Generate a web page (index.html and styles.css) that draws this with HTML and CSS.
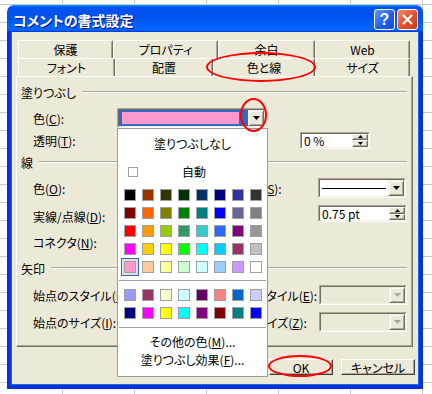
FILE: index.html
```html
<!DOCTYPE html>
<html lang="ja">
<head>
    <meta charset="UTF-8" />
    <title>コメントの書式設定</title>
    <link rel="stylesheet" href="styles.css">
</head>
<body>

    <div class="dialog">
        <div class="titlebar">
            <span class="title">コメントの書式設定</span>
            <span class="tb-btn help">?</span>
            <span class="tb-btn close">
                <svg width="13" height="13" viewBox="0 0 13 13"><path d="M2 2L11 11M11 2L2 11" stroke="#fff" stroke-width="2.2" fill="none"/></svg>
            </span>
        </div>

        <div class="client">
            <div class="tabs">
                <div class="tab-row back">
                    <div class="tab">保護</div>
                    <div class="tab">プロパティ</div>
                    <div class="tab">余白</div>
                    <div class="tab">Web</div>
                </div>
                <div class="tab-row front">
                    <div class="tab">フォント</div>
                    <div class="tab">配置</div>
                    <div class="tab active">色と線</div>
                    <div class="tab">サイズ</div>
                </div>
            </div>

            <div class="panel">
                <div class="group h26"><span>塗りつぶし</span></div>

                <div class="row h26">
                    <span class="lbl">色(<u>C</u>):</span>
                    <div class="sunken color-combo">
                        <div class="in">
                            <div class="current"><div class="current-swatch"></div></div>
                            <div class="ddbtn"><svg width="7" height="4"><polygon points="0,0 7,0 3.5,4" fill="#000"/></svg></div>
                        </div>
                    </div>
                </div>

                <div class="row h18">
                    <span class="lbl">透明(<u>T</u>):</span>
                    <div class="sunken spin trans-spin">
                        <div class="in">
                            <span class="val">0 %</span>
                            <div class="spin-btns">
                                <div class="sb"><svg width="5" height="3"><polygon points="2.5,0 5,3 0,3" fill="#000"/></svg></div>
                                <div class="sb"><svg width="5" height="3"><polygon points="0,0 5,0 2.5,3" fill="#000"/></svg></div>
                            </div>
                        </div>
                    </div>
                </div>

                <div class="group h26"><span>線</span></div>

                <div class="grid4 h26">
                    <span class="lbl">色(<u>O</u>):</span>
                    <div class="sunken hidden-combo"><div class="in"><div class="ddbtn"></div></div></div>
                    <span class="lbl">スタイル(<u>S</u>):</span>
                    <div class="sunken line-combo">
                        <div class="in">
                            <div class="line-sample"></div>
                            <div class="ddbtn"><svg width="7" height="4"><polygon points="0,0 7,0 3.5,4" fill="#000"/></svg></div>
                        </div>
                    </div>
                </div>

                <div class="grid4 h30">
                    <span class="lbl">実線/点線(<u>D</u>):</span>
                    <div class="sunken hidden-combo"><div class="in"><div class="ddbtn"></div></div></div>
                    <span class="lbl">太さ(<u>W</u>):</span>
                    <div class="sunken spin weight-spin">
                        <div class="in">
                            <span class="val">0.75 pt</span>
                            <div class="spin-btns">
                                <div class="sb"><svg width="5" height="3"><polygon points="2.5,0 5,3 0,3" fill="#000"/></svg></div>
                                <div class="sb"><svg width="5" height="3"><polygon points="0,0 5,0 2.5,3" fill="#000"/></svg></div>
                            </div>
                        </div>
                    </div>
                </div>

                <div class="row h22">
                    <span class="lbl">コネクタ(<u>N</u>):</span>
                </div>

                <div class="group h30"><span>矢印</span></div>

                <div class="grid4 h24">
                    <span class="lbl">始点のスタイル(<u>B</u>):</span>
                    <div class="sunken hidden-combo dis"><div class="in"><div class="ddbtn"></div></div></div>
                    <span class="lbl">終点のスタイル(<u>E</u>):</span>
                    <div class="sunken arrow-combo dis">
                        <div class="in">
                            <div class="ddbtn"><svg width="7" height="4"><polygon points="0,0 7,0 3.5,4" fill="#aca899"/></svg></div>
                        </div>
                    </div>
                </div>

                <div class="grid4 h30">
                    <span class="lbl">始点のサイズ(<u>I</u>):</span>
                    <div class="sunken hidden-combo dis"><div class="in"><div class="ddbtn"></div></div></div>
                    <span class="lbl">終点のサイズ(<u>Z</u>):</span>
                    <div class="sunken arrow-combo dis">
                        <div class="in">
                            <div class="ddbtn"><svg width="7" height="4"><polygon points="0,0 7,0 3.5,4" fill="#aca899"/></svg></div>
                        </div>
                    </div>
                </div>

                <!-- color drop-down, open over the panel -->
                <div class="popup">
                    <div class="p-none">塗りつぶしなし</div>
                    <div class="p-auto"><span class="chk"></span><span class="auto-text">自動</span></div>
                    <div class="palette" id="palette-main"></div>
                    <div class="p-sep"></div>
                    <div class="palette extra" id="palette-extra"></div>
                    <div class="p-sep"></div>
                    <div class="p-item">その他の色(<u>M</u>)...</div>
                    <div class="p-item">塗りつぶし効果(<u>F</u>)...</div>
                </div>
            </div>

            <div class="buttons">
                <div class="btn ok">OK</div>
                <div class="btn cancel">キャンセル</div>
            </div>
        </div>

        <div class="mark mark-tab"></div>
        <div class="mark mark-arrow"></div>
        <div class="mark mark-ok"></div>
    </div>

    <script>
    document.addEventListener("DOMContentLoaded", () => {
        const mainColors = [
            "#000000", "#993300", "#333300", "#003300", "#003366", "#000080", "#333399", "#333333",
            "#800000", "#FF6600", "#808000", "#008000", "#008080", "#0000FF", "#666699", "#808080",
            "#FF0000", "#FF9900", "#99CC00", "#339966", "#33CCCC", "#3366FF", "#800080", "#969696",
            "#FF00FF", "#FFCC00", "#FFFF00", "#00FF00", "#00FFFF", "#00CCFF", "#993366", "#C0C0C0",
            "#FF99CC", "#FFCC99", "#FFFF99", "#CCFFCC", "#CCFFFF", "#99CCFF", "#CC99FF", "#FFFFFF"
        ];
        const extraColors = [
            "#9999FF", "#993366", "#FFFFCC", "#CCFFFF", "#660066", "#FF8080", "#0066CC", "#CCCCFF",
            "#000080", "#FF00FF", "#FFFF00", "#00FFFF", "#800080", "#800000", "#008080", "#0000FF"
        ];
        const selected = "#FF99CC";

        function fill(id, colors) {
            const box = document.getElementById(id);
            colors.forEach(c => {
                const cell = document.createElement('div');
                cell.classList.add('cell');
                if (id === 'palette-main' && c === selected) cell.classList.add('sel');
                const sw = document.createElement('div');
                sw.classList.add('sw');
                sw.style.backgroundColor = c;
                cell.appendChild(sw);
                box.appendChild(cell);
            });
        }

        fill('palette-main', mainColors);
        fill('palette-extra', extraColors);
    });
    </script>

</body>
</html>
```

FILE: styles.css
```css
* {
    box-sizing: border-box;
}

body {
    margin: 0;
    font-family: "Noto Sans CJK JP", sans-serif;
    font-size: 12px;
    font-feature-settings: "palt" 1;
    color: #000;
    background-color: #fff;
    background-image: linear-gradient(to right, #c8c8c8 1px, transparent 1px),
                      linear-gradient(to bottom, #c8c8c8 1px, transparent 1px);
    background-size: 72px 18px;
    background-position: -10px 4px;
}

u {
    text-decoration-thickness: 1px;
    text-underline-offset: 1px;
}

.dialog {
    position: relative;
    width: 416px;
    margin: 5px 0 0 7px;
}

/* title bar */
.titlebar {
    height: 27px;
    display: flex;
    align-items: center;
    gap: 2px;
    padding: 2px 5px 0 6px;
    border-radius: 7px 7px 0 0;
    background: linear-gradient(180deg, #0997ff, #0053ee 8%, #0050ee 40%, #06f 88%, #06f 93%, #005bff 95%, #003dd7 96%, #003dd7);
}

.title {
    flex: 1;
    color: #fff;
    font-weight: bold;
    font-size: 14px;
    text-shadow: 1px 1px #0f1089;
    padding-top: 1px;
}

.tb-btn {
    width: 21px;
    height: 21px;
    border: 1px solid #fff;
    border-radius: 3px;
    display: flex;
    align-items: center;
    justify-content: center;
}

.help {
    background: linear-gradient(135deg, #5a9bff, #2059e6 60%, #1c4fd8);
    color: #fff;
    font: bold 16px "Liberation Sans", sans-serif;
}

.close {
    background: linear-gradient(135deg, #f08a66, #e0502b 55%, #c93c18);
}

/* client area */
.client {
    height: 357px;
    background-color: #ece9d8;
    border: 4px solid #0831d9;
    border-top: 0;
    box-shadow: inset 1px 0 #166aee, inset -1px 0 #166aee, inset 0 -1px #166aee;
}

.tabs {
    padding: 8px 0 0 7px;
}

.tab-row {
    display: flex;
    height: 18px;
}

.tab {
    height: 18px;
    display: flex;
    align-items: center;
    justify-content: center;
    background-color: #ece9d8;
    border-top: 1px solid #fff;
    border-left: 1px solid #fff;
    border-right: 1px solid #716f64;
    box-shadow: inset -1px 0 #aca899;
    border-radius: 2px 2px 0 0;
}

.back .tab:nth-child(1) { width: 95px; }
.back .tab:nth-child(2) { width: 105px; }
.back .tab:nth-child(3) { width: 97px; }
.back .tab:nth-child(4) { width: 95px; }

.front .tab:nth-child(1) { width: 97px; }
.front .tab:nth-child(2) { width: 98px; }
.front .tab:nth-child(3) { width: 102px; }
.front .tab:nth-child(4) { width: 95px; }

/* tab page */
.panel {
    position: relative;
    width: 397px;
    height: 271px;
    margin-left: 5px;
    padding-top: 2px;
    border: 1px solid;
    border-color: #fff #716f64 #716f64 #fff;
    box-shadow: inset -1px -1px #aca899;
}

.h18 { height: 18px; }
.h22 { height: 22px; }
.h24 { height: 24px; }
.h26 { height: 26px; }
.h30 { height: 30px; }

.group {
    display: flex;
    align-items: center;
    padding: 0 5px 0 4px;
}

.group::after {
    content: "";
    flex: 1;
    margin-left: 6px;
    border-top: 1px solid #aca899;
    border-bottom: 1px solid #fff;
}

.row {
    display: flex;
    align-items: center;
    padding-left: 16px;
}

.row .lbl {
    width: 84px;
}

.grid4 {
    display: grid;
    grid-template-columns: 84px 103px 98px 89px;
    align-items: center;
    padding-left: 16px;
}

.lbl {
    white-space: nowrap;
}

/* controls */
.sunken {
    border: 1px solid;
    border-color: #aca899 #fff #fff #aca899;
}

.sunken > .in {
    height: 100%;
    display: flex;
    background-color: #fff;
    border: 1px solid;
    border-color: #716f64 #f1efe2 #f1efe2 #716f64;
}

.sunken.dis > .in {
    background-color: #ece9d8;
}

.ddbtn {
    width: 16px;
    margin-left: auto;
    display: flex;
    align-items: center;
    justify-content: center;
    background-color: #ece9d8;
    border: 1px solid;
    border-color: #f1efe2 #716f64 #716f64 #f1efe2;
    box-shadow: inset 1px 1px #fff, inset -1px -1px #aca899;
}

.color-combo {
    width: 149px;
    height: 20px;
}

.current {
    width: 129px;
    padding: 2px 9px 2px 3px;
    background-color: #316ac5;
}

.current-swatch {
    height: 100%;
    background-color: #ff99cc;
}

.spin .val {
    flex: 1;
    align-self: center;
    padding-left: 2px;
    line-height: 13px;
}

.spin-btns {
    width: 16px;
    display: flex;
    flex-direction: column;
}

.sb {
    flex: 1;
    display: flex;
    align-items: center;
    justify-content: center;
    background-color: #ece9d8;
    border: 1px solid;
    border-color: #fff #716f64 #716f64 #fff;
    box-shadow: inset -1px -1px #aca899;
}

.trans-spin {
    width: 70px;
    height: 17px;
    margin-left: 183px;
}

.weight-spin {
    width: 89px;
    height: 17px;
    align-self: start;
    margin-top: 4px;
}

.hidden-combo {
    width: 90px;
    height: 20px;
}

.line-combo {
    width: 88px;
    height: 20px;
}

.line-sample {
    flex: 1;
    display: flex;
    align-items: center;
    padding: 0 2px;
}

.line-sample::before {
    content: "";
    flex: 1;
    border-top: 1px solid #000;
}

.arrow-combo {
    width: 88px;
    height: 20px;
    margin-left: 1px;
}

/* colour drop-down */
.popup {
    position: absolute;
    left: 100px;
    top: 51px;
    width: 151px;
    padding-bottom: 8px;
    background-color: #fff;
    border: 1px solid #9d9d9d;
    z-index: 2;
}

.p-none {
    height: 28px;
    display: flex;
    align-items: center;
    justify-content: center;
}

.p-auto {
    height: 29px;
    display: flex;
    align-items: center;
    padding-left: 10px;
}

.chk {
    width: 10px;
    height: 10px;
    border: 1px solid #a0a0a0;
}

.auto-text {
    margin-left: 44px;
}

.palette {
    display: grid;
    grid-template-columns: repeat(8, 18px);
    grid-auto-rows: 18px;
    padding-left: 3px;
}

.palette.extra {
    margin-top: 5px;
}

.cell {
    display: flex;
    align-items: center;
    justify-content: center;
}

.cell.sel {
    border: 1px solid #316ac5;
    background-color: #e0e0e0;
}

.sw {
    width: 12px;
    height: 12px;
    border: 1px solid #a0a0a0;
}

.p-sep {
    margin: 4px 1px 0;
    border-top: 1px solid #a0a0a0;
}

.palette.extra + .p-sep {
    margin-top: 5px;
}

.p-sep + .p-item {
    margin-top: 4px;
}

.p-item {
    height: 18px;
    display: flex;
    align-items: center;
    justify-content: center;
}

/* OK / cancel */
.buttons {
    display: flex;
    justify-content: flex-end;
    gap: 8px;
    padding-right: 4px;
    margin-top: 12px;
}

.btn {
    height: 16px;
    display: flex;
    align-items: center;
    justify-content: center;
    background-color: #ece9d8;
    border: 1px solid;
    border-color: #fff #404040 #404040 #fff;
    box-shadow: inset -1px -1px #aca899;
}

.ok {
    width: 64px;
}

.cancel {
    width: 74px;
}

/* red annotation rings */
.mark {
    position: absolute;
    border: 2px solid #f00;
    border-radius: 50%;
    z-index: 5;
}

.mark-tab {
    left: 199px;
    top: 47px;
    width: 110px;
    height: 30px;
}

.mark-arrow {
    left: 233px;
    top: 93px;
    width: 27px;
    height: 34px;
}

.mark-ok {
    left: 261px;
    top: 350px;
    width: 64px;
    height: 22px;
}
```
